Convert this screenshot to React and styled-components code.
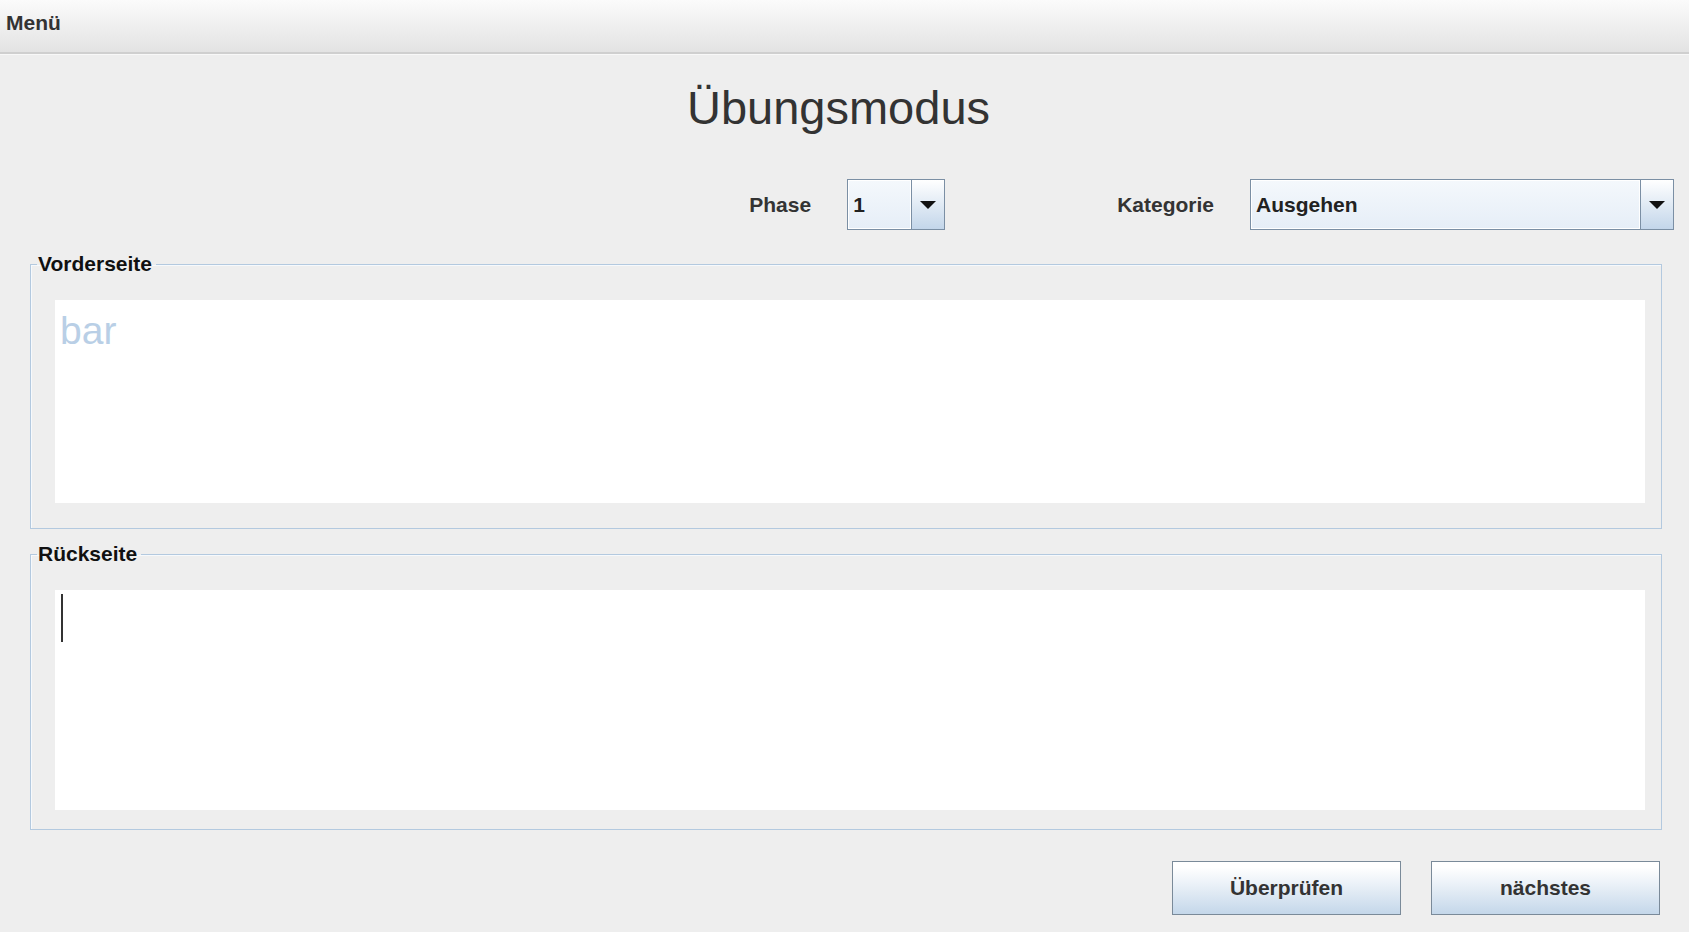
import React from 'react'
import styled, { createGlobalStyle } from "styled-components";

const Global = createGlobalStyle`
  html, body {
    margin: 0;
    padding: 0;
    background: #eeeeee;
  }
  body {
    font-family: "Liberation Sans", Arial, sans-serif;
    width: 1689px;
    height: 932px;
    overflow: hidden;
  }
`;

const MenuBar = styled.div`
  height: 52px;
  background: linear-gradient(#fbfbfb, #e3e3e3);
  border-bottom: 2px solid #cfcfcf;
  box-shadow: 0 1px 0 #f8f8f8;
  display: flex;
  align-items: center;
  padding-left: 6px;
`;

const MenuItem = styled.span`
  font-size: 21px;
  font-weight: bold;
  color: #333;
  margin-top: -6px;
`;

const Title = styled.h1`
  margin: 27px 0 0;
  padding-right: 12px;
  font-size: 47px;
  line-height: 54px;
  font-weight: normal;
  color: #333;
  text-align: center;
`;

const Controls = styled.div`
  display: flex;
  align-items: center;
  justify-content: flex-end;
  padding-right: 15px;
  margin-top: 44px;
`;

const Label = styled.span`
  font-size: 21px;
  font-weight: bold;
  color: #333;
  margin-left: ${p => p.$gap}px;
  margin-right: 36px;
`;

const Combo = styled.div`
  width: ${p => p.$width}px;
  height: 51px;
  box-sizing: border-box;
  border: 1px solid #7b8fa4;
  display: flex;
`;

const ComboValue = styled.div`
  flex: 1;
  display: flex;
  align-items: center;
  padding-left: 4px;
  background: linear-gradient(#f4f8fc, #e6eef7);
  border: 1px solid #fff;
  font-size: 21px;
  font-weight: bold;
  color: #222;
`;

const ComboArrow = styled.div`
  width: 32px;
  border-left: 1px solid #7b8fa4;
  background: linear-gradient(#ffffff, #c3d6ea);
  display: flex;
  align-items: center;
  justify-content: center;

  &::after {
    content: "";
    border-left: 8px solid transparent;
    border-right: 8px solid transparent;
    border-top: 8px solid #111;
  }
`;

const Group = styled.fieldset`
  margin: ${p => p.$top}px 27px 0 30px;
  padding: 24px 16px ${p => p.$bottom}px 24px;
  border: 1px solid #b3c9df;
  box-shadow: inset 1px 1px 0 #f6f9fc;
  min-width: 0;
`;

const Legend = styled.legend`
  font-size: 21px;
  line-height: 24px;
  font-weight: bold;
  color: #111;
  padding: 0 4px 0 1px;
  margin-left: -18px;
`;

const TextBox = styled.div`
  height: ${p => p.$height}px;
  background: #fff;
  padding: 7px 5px 0;
  box-sizing: border-box;
  font-size: 39px;
  line-height: 47px;
  color: #b9cfe6;
`;

const Caret = styled.span`
  display: block;
  width: 2px;
  height: 48px;
  margin: -3px 0 0 1px;
  background: #333;
`;

const Buttons = styled.div`
  display: flex;
  justify-content: flex-end;
  gap: 30px;
  padding-right: 29px;
  margin-top: 31px;
`;

const Button = styled.button`
  width: 229px;
  height: 54px;
  border: 1px solid #7a8a99;
  background: linear-gradient(#ffffff 10%, #e9f0f7 45%, #c4d7ea);
  font-family: "Liberation Sans", Arial, sans-serif;
  font-size: 21px;
  font-weight: bold;
  color: #333;
  padding: 0;
`;

export default function App() {
  return (
    <>
      <Global />
      <MenuBar>
        <MenuItem>Menü</MenuItem>
      </MenuBar>
      <Title>Übungsmodus</Title>
      <Controls>
        <Label $gap={0}>Phase</Label>
        <Combo $width={98}>
          <ComboValue>1</ComboValue>
          <ComboArrow />
        </Combo>
        <Label $gap={172}>Kategorie</Label>
        <Combo $width={424}>
          <ComboValue>Ausgehen</ComboValue>
          <ComboArrow />
        </Combo>
      </Controls>
      <Group $top={22} $bottom={25}>
        <Legend>Vorderseite</Legend>
        <TextBox $height={203}>bar</TextBox>
      </Group>
      <Group $top={13} $bottom={19}>
        <Legend>Rückseite</Legend>
        <TextBox $height={220}>
          <Caret />
        </TextBox>
      </Group>
      <Buttons>
        <Button>Überprüfen</Button>
        <Button>nächstes</Button>
      </Buttons>
    </>
  )
}
